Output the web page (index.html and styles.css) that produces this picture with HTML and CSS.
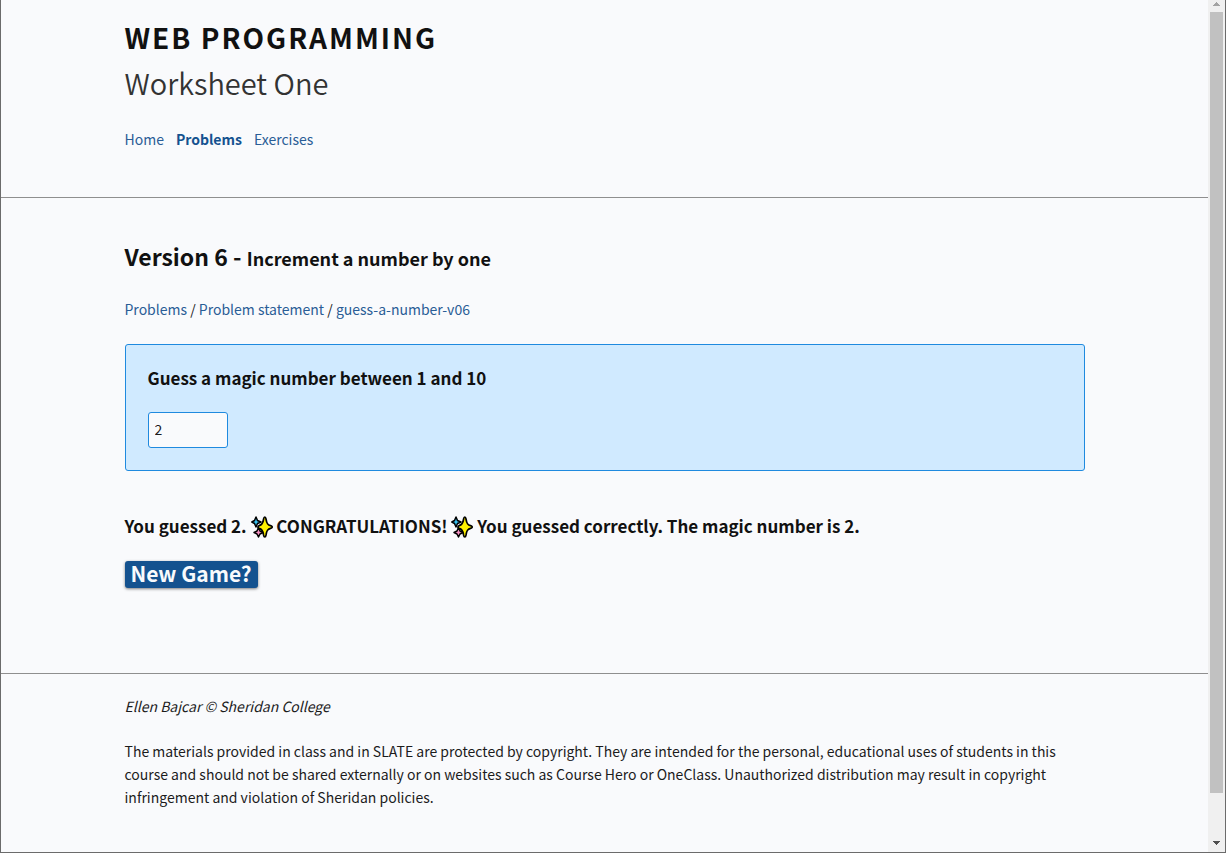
FILE: index.html
```
<!DOCTYPE html>
<html lang="en">
<head>
<meta charset="utf-8">
<title>Web Programming - Worksheet One</title>
<link rel="stylesheet" href="styles.css">
</head>
<body>
<svg class="defs" aria-hidden="true">
  <symbol id="sparkles" viewBox="0 0 22 22">
    <path d="M5 1 L6.500 4.500 L10 6 L6.500 7.500 L5 11 L3.500 7.500 L0.800 6 L3.500 4.500Z" fill="#35c1f1" stroke="#000" stroke-width="1.500" stroke-linejoin="round"/>
    <path d="M7.500 11.500 L9 15 L12 16.500 L9 18 L7.500 21 L6 18 L3 16.500 L6 15Z" fill="#f48fc0" stroke="#000" stroke-width="1.500" stroke-linejoin="round"/>
    <path d="M13.800 1 C14.800 1 14.800 2 15.100 3.500 C15.700 7.500 16.500 8.800 19.500 9.600 C21.800 10.200 21.800 11.800 19.500 12.400 C16.500 13.200 15.700 14.500 15.100 18.500 C14.800 20.200 14.800 21 13.800 21 C12.800 21 12.800 20.200 12.500 18.500 C11.900 14.500 11 13.200 8.200 12.400 C6.500 11.800 6.500 10.200 8.200 9.600 C11 8.800 11.900 7.500 12.500 3.500 C12.800 2 12.800 1 13.800 1Z" fill="#fff100" stroke="#000" stroke-width="1.700" stroke-linejoin="round"/>
  </symbol>
</svg>
<div class="window">
  <div class="page">
    <header class="band header">
      <div class="wrap">
        <h1 class="title">WEB PROGRAMMING</h1>
        <p class="subtitle">Worksheet One</p>
        <nav class="nav">
          <a href="#home">Home</a>
          <a href="#problems" class="active">Problems</a>
          <a href="#exercises">Exercises</a>
        </nav>
      </div>
    </header>
    <main class="band main">
      <div class="wrap">
        <h2 class="version">Version 6 - <small>Increment a number by one</small></h2>
        <nav class="crumbs"><a href="#problems">Problems</a> / <a href="#statement">Problem statement</a> / <a href="#v06">guess-a-number-v06</a></nav>
        <form class="panel">
          <label class="label" for="guess">Guess a magic number between 1 and 10</label>
          <input class="guess" id="guess" type="text" inputmode="numeric" value="2">
        </form>
        <p class="result">You guessed 2. <svg class="spark" role="img" aria-label="sparkles"><use href="#sparkles"/></svg> CONGRATULATIONS! <svg class="spark" role="img" aria-label="sparkles"><use href="#sparkles"/></svg> You guessed correctly. The magic number is 2.</p>
        <button class="new-game" type="button">New Game?</button>
      </div>
    </main>
    <footer class="footer">
      <div class="wrap">
        <p class="author">Ellen Bajcar © Sheridan College</p>
        <p class="legal">The materials provided in class and in SLATE are protected by copyright. They are intended for the personal, educational uses of students in this course and should not be shared externally or on websites such as Course Hero or OneClass. Unauthorized distribution may result in copyright infringement and violation of Sheridan policies.</p>
      </div>
    </footer>
  </div>
  <div class="scrollbar" aria-hidden="true">
    <svg class="arrow" viewBox="0 0 17 12"><path d="M5 6h7v-1h-1v-1h-1v-1h-1v-1h-1v1h-1v1h-1v1h-1z" fill="#a3a3a3"/></svg>
    <div class="track"><div class="thumb"></div></div>
    <svg class="arrow" viewBox="0 0 17 12"><path d="M5 1h7v1h-1v1h-1v1h-1v1h-1v-1h-1v-1h-1v-1h-1z" fill="#505050"/></svg>
  </div>
</div>
</body>
</html>
```
FILE: styles.css
```
* { box-sizing: border-box; }
body {
  margin: 0;
  background: #f9fafc;
  color: #1c1c1c;
  font-family: "Noto Sans CJK SC", "Noto Sans", sans-serif;
  font-size: 14px;
  font-weight: 400;
  line-height: 23px;
}
h1, h2, p { margin: 0; }
a { color: #2a5d96; text-decoration: none; }
.defs { position: absolute; width: 0; height: 0; }
.window {
  display: flex;
  min-height: 100vh;
  border: 1px solid #6b6b6b;
  border-top: 0;
}
.page { flex: 1; min-width: 0; }
.wrap { max-width: 960px; margin: 0 auto; }
.band { border-bottom: 1px solid #8f8f8f; }
.header { padding: 15px 0 46px; }
.title { color: #111; font-size: 28px; line-height: 45px; font-weight: 700; letter-spacing: 2px; }
.subtitle { font-size: 29px; line-height: 44px; font-weight: 350; color: #333; }
.nav { display: flex; gap: 12px; margin-top: 24px; }
.active { color: #14528f; font-weight: 700; }
.main { padding: 38px 0 85px; }
.version { color: #111; font-size: 23px; line-height: 40px; font-weight: 700; }
.version small { font-size: 18px; }
.crumbs { margin-top: 20px; }
.panel {
  margin-top: 23px;
  padding: 21px 22px 22px;
  border: 1px solid #1f8adf;
  border-radius: 3px;
  background: #d0eaff;
}
.label { display: block; color: #111; font-size: 17px; line-height: 24px; font-weight: 700; }
.guess {
  display: block;
  width: 80px;
  height: 36px;
  margin-top: 22px;
  padding: 0 6px 2px;
  border: 1px solid #1f8adf;
  border-radius: 3px;
  background: #f9fafc;
  color: #1c1c1c;
  font: inherit;
}
.result { margin-top: 43px; color: #111; font-size: 17px; line-height: 24px; font-weight: 700; }
.spark { width: 22px; height: 22px; vertical-align: -5px; }
.new-game {
  display: block;
  height: 27px;
  margin-top: 23px;
  padding: 0 6px 2px;
  border: 0;
  border-radius: 3px;
  background: #14528f;
  box-shadow: 0 1px 3px rgba(0, 0, 0, .5);
  color: #f9fafc;
  font-family: inherit;
  font-size: 21px;
  font-weight: 700;
  line-height: 25px;
}
.footer { padding: 21px 0 41px; }
.author { font-style: italic; }
.legal { margin-top: 22px; }
.scrollbar {
  display: flex;
  flex-direction: column;
  width: 17px;
  background: #f0f0f0;
}
.arrow { width: 17px; height: 12px; }
.track { flex: 1; padding: 0 2px; }
.thumb { height: calc(100% - 47px); background: #c1c1c1; }
```
